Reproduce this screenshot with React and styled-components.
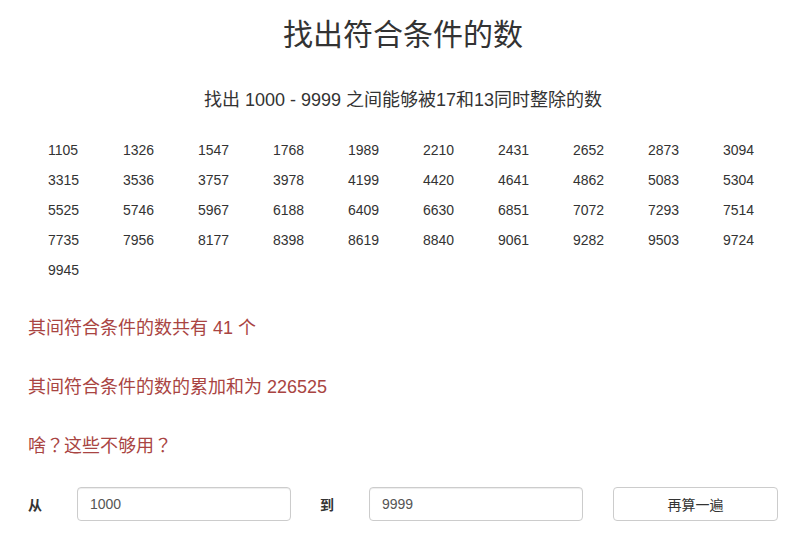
import styled, { createGlobalStyle } from 'styled-components';

const GlobalStyle = createGlobalStyle`
  html, body {
    margin: 0;
    padding: 0;
    background: #fff;
  }
  body {
    font-family: "Liberation Sans", "Noto Sans CJK SC", sans-serif;
    font-size: 14px;
    color: #333;
  }
`;

const Page = styled.div`
  width: 807px;
  padding: 18px 29px 0 28px;
  box-sizing: border-box;
  display: flex;
  flex-direction: column;
`;

const Title = styled.h1`
  margin: 0;
  font-size: 30px;
  font-weight: 400;
  line-height: 33px;
  text-align: center;
  color: #333;
`;

const Subtitle = styled.h4`
  margin: 37px 0 0;
  font-size: 18px;
  font-weight: 400;
  line-height: 24px;
  text-align: center;
  color: #333;
`;

const NumberGrid = styled.ul`
  list-style: none;
  margin: 23px 0 0 20px;
  padding: 0;
  display: grid;
  grid-template-columns: repeat(10, 75px);
`;

const NumberCell = styled.li`
  font-size: 14px;
  line-height: 30px;
  color: #333;
`;

const Results = styled.div`
  margin-top: 31px;
  display: flex;
  flex-direction: column;
  gap: 35px;
`;

const Danger = styled.p`
  margin: 0;
  height: 24px;
  font-size: 18px;
  line-height: 24px;
  color: #a94442;
`;

/* 全角问号居中显示 */
const Punct = styled.span`
  font-family: "Noto Sans CJK TC", sans-serif;
  line-height: 1;
`;

const FormRow = styled.div`
  margin-top: 29px;
  display: flex;
  align-items: center;
`;

const Label = styled.label`
  flex: 0 0 49px;
  font-weight: 700;
  font-size: 14px;
  color: #333;
  margin-left: ${(p) => p.$offset || 0}px;
`;

const Input = styled.input`
  box-sizing: border-box;
  flex: 0 0 214px;
  height: 34px;
  padding: 6px 12px;
  font-family: inherit;
  font-size: 14px;
  color: #555;
  background: #fff;
  border: 1px solid #ccc;
  border-radius: 4px;
  box-shadow: inset 0 1px 1px rgba(0, 0, 0, 0.075);
  outline: none;
`;

const Button = styled.button`
  box-sizing: border-box;
  flex: 0 0 165px;
  height: 34px;
  margin-left: 30px;
  font-family: inherit;
  font-size: 14px;
  color: #333;
  background: #fff;
  border: 1px solid #ccc;
  border-radius: 4px;
  cursor: pointer;
`;

const from = 1000;
const to = 9999;
const nums = [];
for (let i = from; i <= to; i++) {
  if (i % 17 === 0 && i % 13 === 0) nums.push(i);
}
const sum = nums.reduce((a, b) => a + b, 0);

export default function App() {
  return (
    <>
      <GlobalStyle />
      <Page>
        <Title>找出符合条件的数</Title>
        <Subtitle>找出 {from} - {to} 之间能够被17和13同时整除的数</Subtitle>
        <NumberGrid>
          {nums.map((n) => (
            <NumberCell key={n}>{n}</NumberCell>
          ))}
        </NumberGrid>
        <Results>
          <Danger>其间符合条件的数共有 {nums.length} 个</Danger>
          <Danger>其间符合条件的数的累加和为 {sum}</Danger>
          <Danger>
            啥<Punct>？</Punct>这些不够用<Punct>？</Punct>
          </Danger>
        </Results>
        <FormRow>
          <Label>从</Label>
          <Input defaultValue="1000" />
          <Label $offset={29}>到</Label>
          <Input defaultValue="9999" />
          <Button>再算一遍</Button>
        </FormRow>
      </Page>
    </>
  );
}
